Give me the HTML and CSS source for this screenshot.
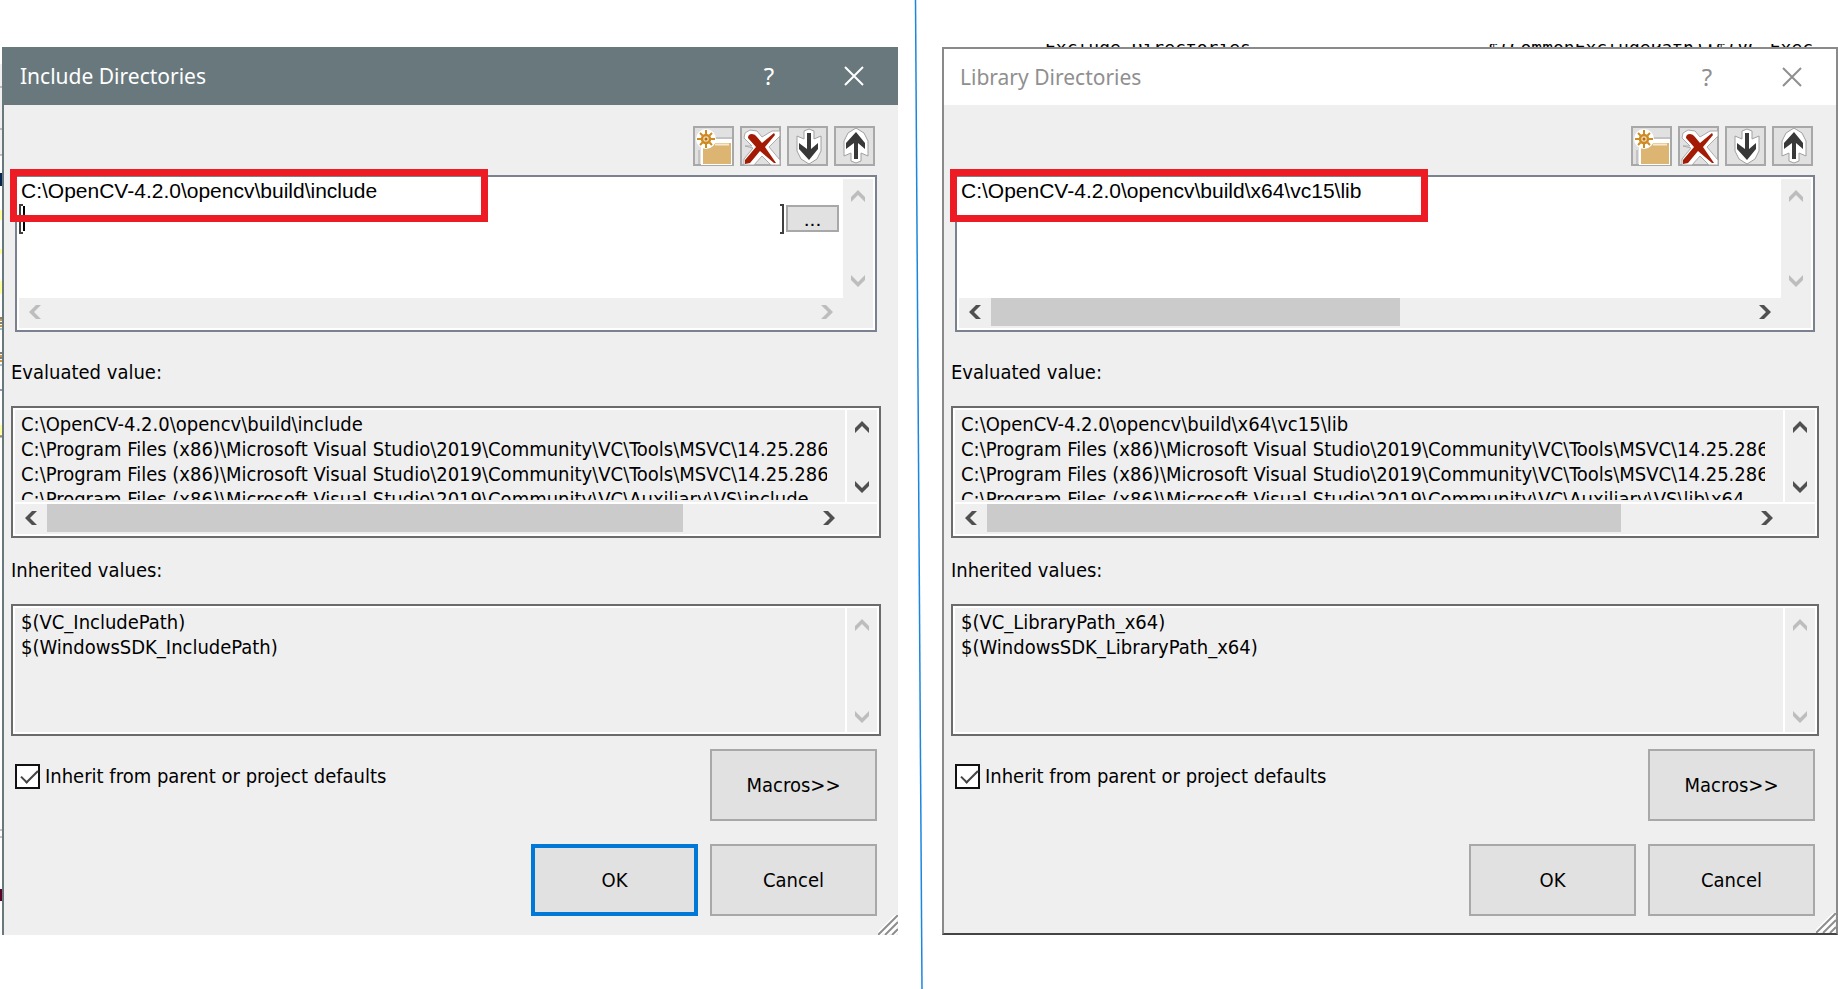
FILE: index.html
```html
<!DOCTYPE html>
<html lang="en">

<head>
    <meta charset="UTF-8">
    <meta name="viewport" content="width=device-width, initial-scale=1.0">
    <title>Include and Library Directories</title>
    <link rel="stylesheet" href="styles.css">
</head>

<body>
    <!-- shared icons -->
    <svg class="defs" width="0" height="0">
        <symbol id="new-folder" viewBox="0 0 41 40">
            <path d="M6 24V40M20 12H40" stroke="#a6a6a6" stroke-width="1" fill="none" />
            <path d="M8 13H39V39H8Z" fill="#fff" />
            <path d="M10 17H38V38H10Z" fill="#dcb573" />
            <path d="M22 18.500H36" stroke="#f7e8cf" stroke-width="2" />
            <circle cx="13" cy="13" r="10" fill="#fff" />
            <circle cx="13" cy="13" r="4" fill="#f3dcb4" stroke="#d08a22" stroke-width="2.500" />
            <circle cx="13" cy="13" r="1.500" fill="#b06a10" />
            <path d="M13 4V8M13 18V22M4 13H8M18 13H22M7 7L9.500 9.500M19 7L16.500 9.500M7 19L9.500 16.500M19 19L16.500 16.500" stroke="#d08a22" stroke-width="2" />
        </symbol>
        <symbol id="delete" viewBox="0 0 41 40">
            <path d="M5 20L12 20L4 12L5 7L10 4L17 5L22 11L32 5L40 5V10L29 21L40 34V39H31L22 30L14 39H4V33L13 22Z" fill="#fff" stroke="#ababab" />
            <path d="M8 12Q8 8 12 8Q15 8 17 11L22 17L34 7L35 9L25 21L36 37L34 37L20 25L10 37L5 38L5 34L16 21Z" fill="#a31b05" />
        </symbol>
        <symbol id="arrow" viewBox="0 0 41 40">
            <path d="M17 5L22 3L27 5V13L34 10V25L30 33L22 38L14 33L10 25V10L17 13Z" fill="#fff" stroke="#a0a0a0" />
            <path d="M20 7H24V23L31 17V23L22 34L12 23V17L20 23Z" fill="#383838" />
        </symbol>
        <symbol id="close" viewBox="0 0 20 20">
            <path d="M1 1L19 19M19 1L1 19" stroke="currentColor" stroke-width="2" fill="none" />
        </symbol>
        <symbol id="chevron" viewBox="0 0 14 12">
            <path d="M0 7L7 0L14 7V12L7 5L0 12Z" fill="currentColor" />
        </symbol>
        <symbol id="grip" viewBox="0 0 20 20">
            <path d="M0 20L20 0M7 20L20 7M14 20L20 14" stroke="#fff" stroke-width="5" />
            <path d="M0 20L20 0M7 20L20 7M14 20L20 14" stroke="#8e8e8e" stroke-width="2" />
        </symbol>
    </svg>

    <!-- edge of the editor window behind the dialog -->
    <svg class="window-edge" viewBox="0 0 2 989" preserveAspectRatio="none">
        <path d="M0 64H2V155H0Z" fill="#f0f0f0" />
        <path d="M0 87H2M0 129H2M0 155H2M0 830H2M0 837H2" stroke="#8c8c8c" />
        <path d="M0 173H2V186H0Z" fill="#06264f" />
        <path d="M0 210H2V220H0ZM0 249H2V254H0ZM0 281H2V294H0ZM0 425H2V434H0Z" fill="#ffffa0" />
        <path d="M0 318H2M0 323H2M0 353H2M0 358H2" stroke="#000" />
        <path d="M0 320H2M0 326H2M0 356H2M0 361H2M0 436H2" stroke="#d9953a" stroke-width="2" />
        <path d="M0 329H2M0 365H2M0 437H2" stroke="#3f8f8f" />
        <path d="M0 390H2" stroke="#1c2f7c" />
        <path d="M0 889H2V901H0Z" fill="#5c0028" />
    </svg>

    <div class="side">
        <form class="dialog active">
            <div class="titlebar">
                <h1>Include Directories</h1>
                <button type="button" class="help" aria-label="Help">?</button>
                <button type="button" class="close" aria-label="Close"><svg><use href="#close" /></svg></button>
            </div>
            <div class="content">
                <div class="toolbar">
                    <button type="button" aria-label="New line"><svg><use href="#new-folder" /></svg></button>
                    <button type="button" aria-label="Delete"><svg><use href="#delete" /></svg></button>
                    <button type="button" aria-label="Move down"><svg><use href="#arrow" /></svg></button>
                    <button type="button" aria-label="Move up"><svg class="flip"><use href="#arrow" /></svg></button>
                </div>
                <div class="box list">
                    <div class="rows">
                        <div class="row">C:\OpenCV-4.2.0\opencv\build\include</div>
                        <div class="edit-row">
                            <span class="bracket"></span>
                            <span class="caret"></span>
                            <input type="text" aria-label="Directory">
                            <span class="bracket right"></span>
                            <button type="button" class="browse">...</button>
                        </div>
                    </div>
                    <div class="vbar off">
                        <svg><use href="#chevron" /></svg>
                        <svg class="flip"><use href="#chevron" /></svg>
                    </div>
                    <div class="hbar off">
                        <svg class="to-left"><use href="#chevron" /></svg>
                        <div class="track"></div>
                        <svg class="to-right"><use href="#chevron" /></svg>
                    </div>
                    <div class="marker"></div>
                </div>

                <label for="inc-evaluated">Evaluated value:</label>
                <div class="box">
                    <textarea id="inc-evaluated" wrap="off" readonly>C:\OpenCV-4.2.0\opencv\build\include
C:\Program Files (x86)\Microsoft Visual Studio\2019\Community\VC\Tools\MSVC\14.25.28610\include
C:\Program Files (x86)\Microsoft Visual Studio\2019\Community\VC\Tools\MSVC\14.25.28610\atlmfc\include
C:\Program Files (x86)\Microsoft Visual Studio\2019\Community\VC\Auxiliary\VS\include</textarea>
                    <div class="vbar">
                        <svg><use href="#chevron" /></svg>
                        <svg class="flip"><use href="#chevron" /></svg>
                    </div>
                    <div class="hbar">
                        <svg class="to-left"><use href="#chevron" /></svg>
                        <div class="track"><div class="thumb" style="width: 83%;"></div></div>
                        <svg class="to-right"><use href="#chevron" /></svg>
                    </div>
                </div>

                <label for="inc-inherited">Inherited values:</label>
                <div class="box single">
                    <textarea id="inc-inherited" wrap="off" readonly>$(VC_IncludePath)
$(WindowsSDK_IncludePath)</textarea>
                    <div class="vbar off">
                        <svg><use href="#chevron" /></svg>
                        <svg class="flip"><use href="#chevron" /></svg>
                    </div>
                </div>

                <div class="footer">
                    <label class="inherit"><input type="checkbox" checked>Inherit from parent or project defaults</label>
                    <button type="button" class="push">Macros&gt;&gt;</button>
                    <button type="button" class="push default">OK</button>
                    <button type="button" class="push">Cancel</button>
                </div>
            </div>
            <svg class="grip"><use href="#grip" /></svg>
        </form>
    </div>

    <svg class="divider" viewBox="0 0 44 989" preserveAspectRatio="none">
        <path d="M17.500 0L24 989" stroke="#1a86e0" stroke-width="1.500" />
    </svg>

    <div class="side">
        <!-- property grid row showing above the dialog -->
        <div class="behind">
            <span>Exclude Directories</span>
            <span>$(CommonExcludePath);$(VC_Exec</span>
        </div>
        <form class="dialog">
            <div class="titlebar">
                <h1>Library Directories</h1>
                <button type="button" class="help" aria-label="Help">?</button>
                <button type="button" class="close" aria-label="Close"><svg><use href="#close" /></svg></button>
            </div>
            <div class="content">
                <div class="toolbar">
                    <button type="button" aria-label="New line"><svg><use href="#new-folder" /></svg></button>
                    <button type="button" aria-label="Delete"><svg><use href="#delete" /></svg></button>
                    <button type="button" aria-label="Move down"><svg><use href="#arrow" /></svg></button>
                    <button type="button" aria-label="Move up"><svg class="flip"><use href="#arrow" /></svg></button>
                </div>
                <div class="box list">
                    <div class="rows">
                        <div class="row">C:\OpenCV-4.2.0\opencv\build\x64\vc15\lib</div>
                    </div>
                    <div class="vbar off">
                        <svg><use href="#chevron" /></svg>
                        <svg class="flip"><use href="#chevron" /></svg>
                    </div>
                    <div class="hbar">
                        <svg class="to-left"><use href="#chevron" /></svg>
                        <div class="track"><div class="thumb" style="width: 54%;"></div></div>
                        <svg class="to-right"><use href="#chevron" /></svg>
                    </div>
                    <div class="marker"></div>
                </div>

                <label for="lib-evaluated">Evaluated value:</label>
                <div class="box">
                    <textarea id="lib-evaluated" wrap="off" readonly>C:\OpenCV-4.2.0\opencv\build\x64\vc15\lib
C:\Program Files (x86)\Microsoft Visual Studio\2019\Community\VC\Tools\MSVC\14.25.28610\lib\x64
C:\Program Files (x86)\Microsoft Visual Studio\2019\Community\VC\Tools\MSVC\14.25.28610\atlmfc\lib\x64
C:\Program Files (x86)\Microsoft Visual Studio\2019\Community\VC\Auxiliary\VS\lib\x64</textarea>
                    <div class="vbar">
                        <svg><use href="#chevron" /></svg>
                        <svg class="flip"><use href="#chevron" /></svg>
                    </div>
                    <div class="hbar">
                        <svg class="to-left"><use href="#chevron" /></svg>
                        <div class="track"><div class="thumb" style="width: 83%;"></div></div>
                        <svg class="to-right"><use href="#chevron" /></svg>
                    </div>
                </div>

                <label for="lib-inherited">Inherited values:</label>
                <div class="box single">
                    <textarea id="lib-inherited" wrap="off" readonly>$(VC_LibraryPath_x64)
$(WindowsSDK_LibraryPath_x64)</textarea>
                    <div class="vbar off">
                        <svg><use href="#chevron" /></svg>
                        <svg class="flip"><use href="#chevron" /></svg>
                    </div>
                </div>

                <div class="footer">
                    <label class="inherit"><input type="checkbox" checked>Inherit from parent or project defaults</label>
                    <button type="button" class="push">Macros&gt;&gt;</button>
                    <button type="button" class="push">OK</button>
                    <button type="button" class="push">Cancel</button>
                </div>
            </div>
            <svg class="grip"><use href="#grip" /></svg>
        </form>
    </div>
</body>
</html>
```

FILE: styles.css
```css
* {
    box-sizing: border-box;
}

body {
    margin: 0;
    display: flex;
    align-items: flex-start;
    min-height: 100vh;
    background: #fff;
    color: #000;
    font-family: "DejaVu Sans Condensed", "DejaVu Sans", sans-serif;
    font-stretch: condensed;
    font-size: 20px;
    line-height: 24px;
}

button, input, textarea {
    font: inherit;
    color: inherit;
    margin: 0;
    padding: 0;
}

.defs {
    position: absolute;
}

.window-edge {
    width: 2px;
    height: 100vh;
}

.divider {
    width: 44px;
    height: 100vh;
}

.side {
    flex: 1;
    min-width: 0;
}

.behind {
    display: grid;
    grid-template-columns: 443px 1fr;
    height: 4px;
    margin-top: 44px;
    margin-bottom: -1px;
    padding-left: 103px;
    overflow: hidden;
    font-family: "DejaVu Sans Mono", monospace;
    font-size: 18px;
    line-height: 8px;
    white-space: nowrap;
}

/* dialog window */
.dialog {
    position: relative;
    background: #efefef;
    border: 2px solid #8a8a8a;
    border-bottom-color: #444;
}

.dialog.active {
    margin-top: 47px;
    border: none;
    border-left: 2px solid #69787d;
    padding-bottom: 2px;
}

.titlebar {
    display: flex;
    align-items: center;
    height: 56px;
    padding-left: 16px;
    background: #fff;
    color: #8f8f8f;
    font-family: "Noto Sans", sans-serif;
}

.active .titlebar {
    height: 58px;
    background: #69787d;
    color: #fff;
}

.titlebar h1 {
    flex: 1;
    margin: 0;
    font-size: 21px;
    font-weight: normal;
}

.titlebar button {
    height: 100%;
    border: none;
    background: none;
}

.help {
    width: 82px;
    font-size: 24px;
}

.close {
    width: 88px;
}

.close svg {
    display: block;
    width: 20px;
    height: 20px;
    margin: auto;
}

.content {
    padding: 21px 17px 17px 7px;
}

.toolbar {
    display: flex;
    justify-content: flex-end;
    gap: 6px;
    margin: 0 6px 9px 0;
}

.toolbar button {
    width: 41px;
    height: 40px;
    border: none;
    background: #e1e1e1;
    box-shadow: inset 0 0 0 2px #a8a8a8;
}

.toolbar svg {
    display: block;
    width: 41px;
    height: 40px;
}

.flip {
    transform: scaleY(-1);
}

/* boxes with scroll bars */
.box {
    position: relative;
    display: grid;
    grid-template-columns: minmax(0, 1fr) 32px;
    grid-template-rows: minmax(0, 1fr) 32px;
    height: 132px;
    padding: 2px;
    border: 2px solid #6b6b6b;
    background: #efefef;
    box-shadow: inset 0 0 0 2px #fff;
}

.box.single {
    grid-template-rows: minmax(0, 1fr);
}

.box.list {
    grid-template-columns: minmax(0, 1fr) 30px;
    grid-template-rows: minmax(0, 1fr) 30px;
    height: 157px;
    margin: 0 4px;
    border-color: #7a8290;
    background: #fff;
}

.box textarea {
    margin: 2px 18px 2px 6px;
    border: none;
    outline: none;
    resize: none;
    overflow: hidden;
    background: none;
    line-height: 25px;
    white-space: pre;
}

.vbar {
    display: flex;
    flex-direction: column;
    justify-content: space-between;
    align-items: center;
    padding: 11px 0 9px;
    border-left: 2px solid #fff;
    background: #efefef;
    color: #505050;
}

.vbar svg {
    width: 14px;
    height: 12px;
}

.hbar {
    grid-column: 1 / 3;
    display: grid;
    grid-template-columns: 32px 1fr 32px;
    align-items: center;
    justify-items: center;
    padding: 0 32px 2px 0;
    border-top: 2px solid #fff;
    background: #efefef;
    color: #505050;
}

.list .vbar, .list .hbar {
    border: none;
}

.list .vbar {
    padding-bottom: 11px;
}

.list .hbar {
    padding-right: 30px;
}

.hbar svg {
    width: 14px;
    height: 12px;
}

.to-left {
    transform: rotate(-90deg);
}

.to-right {
    transform: rotate(90deg);
}

.vbar.off, .hbar.off {
    color: #bdbdbd;
}

.track {
    width: 100%;
    height: 28px;
}

.thumb {
    height: 28px;
    background: #cbcbcb;
}

.rows {
    font-family: "Liberation Sans", Arial, sans-serif;
    font-size: 21px;
}

.row {
    padding-left: 2px;
}

.edit-row {
    display: flex;
    align-items: center;
    height: 31px;
    padding-right: 4px;
}

.edit-row input {
    flex: 1;
    min-width: 0;
    border: none;
    outline: none;
    background: none;
}

.bracket {
    width: 4px;
    height: 30px;
    border: 2px solid #404040;
    border-right: none;
}

.bracket.right {
    border-right: 2px solid #404040;
    border-left: none;
}

.caret {
    width: 2px;
    height: 25px;
    background: #000;
}

.browse {
    width: 53px;
    height: 27px;
    margin-left: 2px;
    border: 2px solid #a8a8a8;
    background: #e1e1e1;
    line-height: 22px;
}

.marker {
    position: absolute;
    top: -8px;
    left: -7px;
    width: 478px;
    height: 53px;
    border: 7px solid #ed1c24;
    pointer-events: none;
}

.content > label {
    display: block;
    margin: 28px 0 22px;
}

.content > .box:not(.list) + label {
    margin-top: 20px;
}

.footer {
    display: grid;
    grid-template-columns: 1fr 167px 167px;
    gap: 23px 12px;
    margin: 13px 4px 0;
}

.inherit {
    grid-column: 1 / 3;
    display: flex;
    align-items: center;
    gap: 5px;
    height: 54px;
}

.inherit input {
    appearance: none;
    width: 25px;
    height: 25px;
    border: 2px solid #111;
    background: #fff;
}

.inherit input:checked::before {
    content: "";
    display: block;
    width: 15px;
    height: 7px;
    margin: 4px 0 0 4px;
    border: 2px solid #444;
    border-top: none;
    border-right: none;
    transform: rotate(-45deg);
}

.push {
    height: 72px;
    border: 2px solid #a8a8a8;
    background: #e1e1e1;
    text-align: center;
}

.push:nth-of-type(2) {
    grid-column: 2;
}

.push.default {
    border: 4px solid #0078d7;
}

.grip {
    position: absolute;
    right: 0;
    bottom: 0;
    width: 20px;
    height: 20px;
}
```
